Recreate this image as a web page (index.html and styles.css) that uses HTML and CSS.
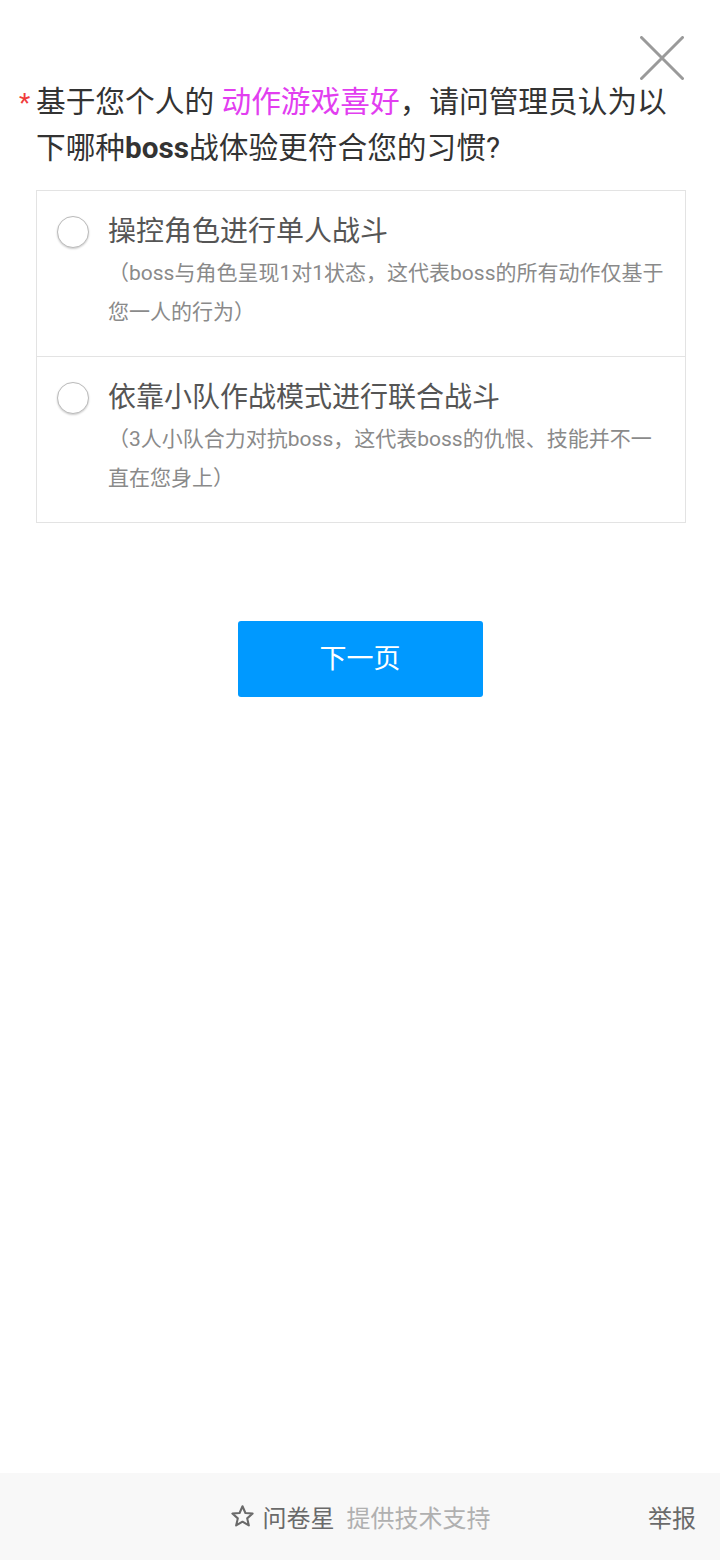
FILE: index.html
```html
<!DOCTYPE html>
<html lang="zh">
<head>
<meta charset="utf-8">
<title>问卷</title>
<link rel="stylesheet" href="styles.css">
</head>
<body>
<div class="page">
  <main class="main">
    <button class="close" aria-label="关闭">
      <svg width="44" height="44" viewBox="0 0 44 44"><path d="M1.5 1.5 L42.5 42.5 M42.5 1.5 L1.5 42.5" stroke="#9a9a9a" stroke-width="3" stroke-linecap="round" fill="none"/></svg>
    </button>
    <h1 class="question"><span class="req">*</span>基于您个人的 <span class="hl">动作游戏喜好</span>，请问管理员认为以下哪种<b>boss</b>战体验更符合您的习惯?</h1>
    <div class="options">
      <label class="option">
        <span class="radio"></span>
        <span class="opt-title">操控角色进行单人战斗</span>
        <span class="opt-sub">（boss与角色呈现1对1状态，这代表boss的所有动作仅基于您一人的行为）</span>
      </label>
      <label class="option">
        <span class="radio"></span>
        <span class="opt-title">依靠小队作战模式进行联合战斗</span>
        <span class="opt-sub">（3人小队合力对抗boss，这代表boss的仇恨、技能并不一直在您身上）</span>
      </label>
    </div>
    <div class="actions">
      <button class="next">下一页</button>
    </div>
  </main>
  <footer class="footer">
    <div class="brand">
      <svg class="star" width="25" height="25" viewBox="0 0 24 24"><path d="M12 2.2 L14.8 8.6 L21.7 9.2 L16.5 13.8 L18.1 20.6 L12 17 L5.9 20.6 L7.5 13.8 L2.3 9.2 L9.2 8.6 Z" fill="none" stroke="#6a6a6a" stroke-width="2" stroke-linejoin="round"/></svg>
      <span class="brand-name">问卷星</span>
      <span class="brand-note">提供技术支持</span>
    </div>
    <a class="report">举报</a>
  </footer>
</div>
</body>
</html>
```

FILE: styles.css
```css
* { box-sizing: border-box; }
html, body { margin: 0; padding: 0; background: #fff; }
body { font-family: Roboto, "Noto Sans CJK SC", "Noto Sans", sans-serif; }

.page {
  min-height: 1560px;
  display: flex;
  flex-direction: column;
}
.main {
  flex: 1;
  position: relative;
  padding: 79px 34px 0 36px;
}
.close {
  position: absolute;
  top: 36px;
  right: 36px;
  width: 44px;
  height: 44px;
  padding: 0;
  border: 0;
  background: none;
  display: block;
}
.close svg { display: block; }

.question {
  margin: 0;
  font-size: 29.7px;
  font-weight: 400;
  line-height: 46px;
  color: #333;
}
.req {
  display: inline-block;
  width: 18px;
  margin-left: -18px;
  color: #f03c3c;
  font-size: 26px;
  line-height: 1;
  padding-left: 1px;
  vertical-align: baseline;
}
.hl { color: #e23ef0; }
.question b { font-weight: 700; }

.options {
  margin-top: 19px;
  border: 1px solid #e3e3e3;
}
.option {
  display: grid;
  grid-template-columns: 32px 1fr;
  column-gap: 19px;
  padding: 21px 20px 24px 20px;
}
.option + .option { border-top: 1px solid #e3e3e3; }
.radio {
  grid-row: 1;
  grid-column: 1;
  align-self: center;
  width: 32px;
  height: 32px;
  border-radius: 50%;
  border: 1.5px solid #bbb;
  box-shadow: 0 1px 2px rgba(0,0,0,0.2);
  background: #fff;
}
.opt-title {
  grid-row: 1;
  grid-column: 2;
  font-size: 28px;
  line-height: 40px;
  color: #555;
}
.opt-sub {
  grid-row: 2;
  grid-column: 2;
  margin-top: 2px;
  font-size: 21px;
  line-height: 39px;
  color: #8a8a8a;
}

.actions {
  display: flex;
  justify-content: center;
  margin-top: 98px;
}
.next {
  width: 245px;
  height: 76px;
  border: 0;
  border-radius: 3px;
  background: #0099ff;
  color: #fff;
  font-family: Roboto, "Noto Sans CJK SC", sans-serif;
  font-size: 27px;
  padding: 0 0 6px 0;
  margin-right: 2px;
}

.footer {
  height: 87px;
  background: #f8f8f8;
  display: grid;
  grid-template-columns: 1fr auto 1fr;
  align-items: center;
  padding: 0 24px 0 0;
}
.brand {
  grid-column: 2;
  display: flex;
  align-items: center;
  padding-left: 24px;
}
.star { display: block; margin-right: 8px; }
.brand-name {
  font-size: 24px;
  color: #6a6a6a;
  margin-right: 12px;
}
.brand-note {
  font-size: 24px;
  color: #b0b0b0;
}
.report {
  grid-column: 3;
  justify-self: end;
  font-size: 24px;
  color: #6a6a6a;
}
```
